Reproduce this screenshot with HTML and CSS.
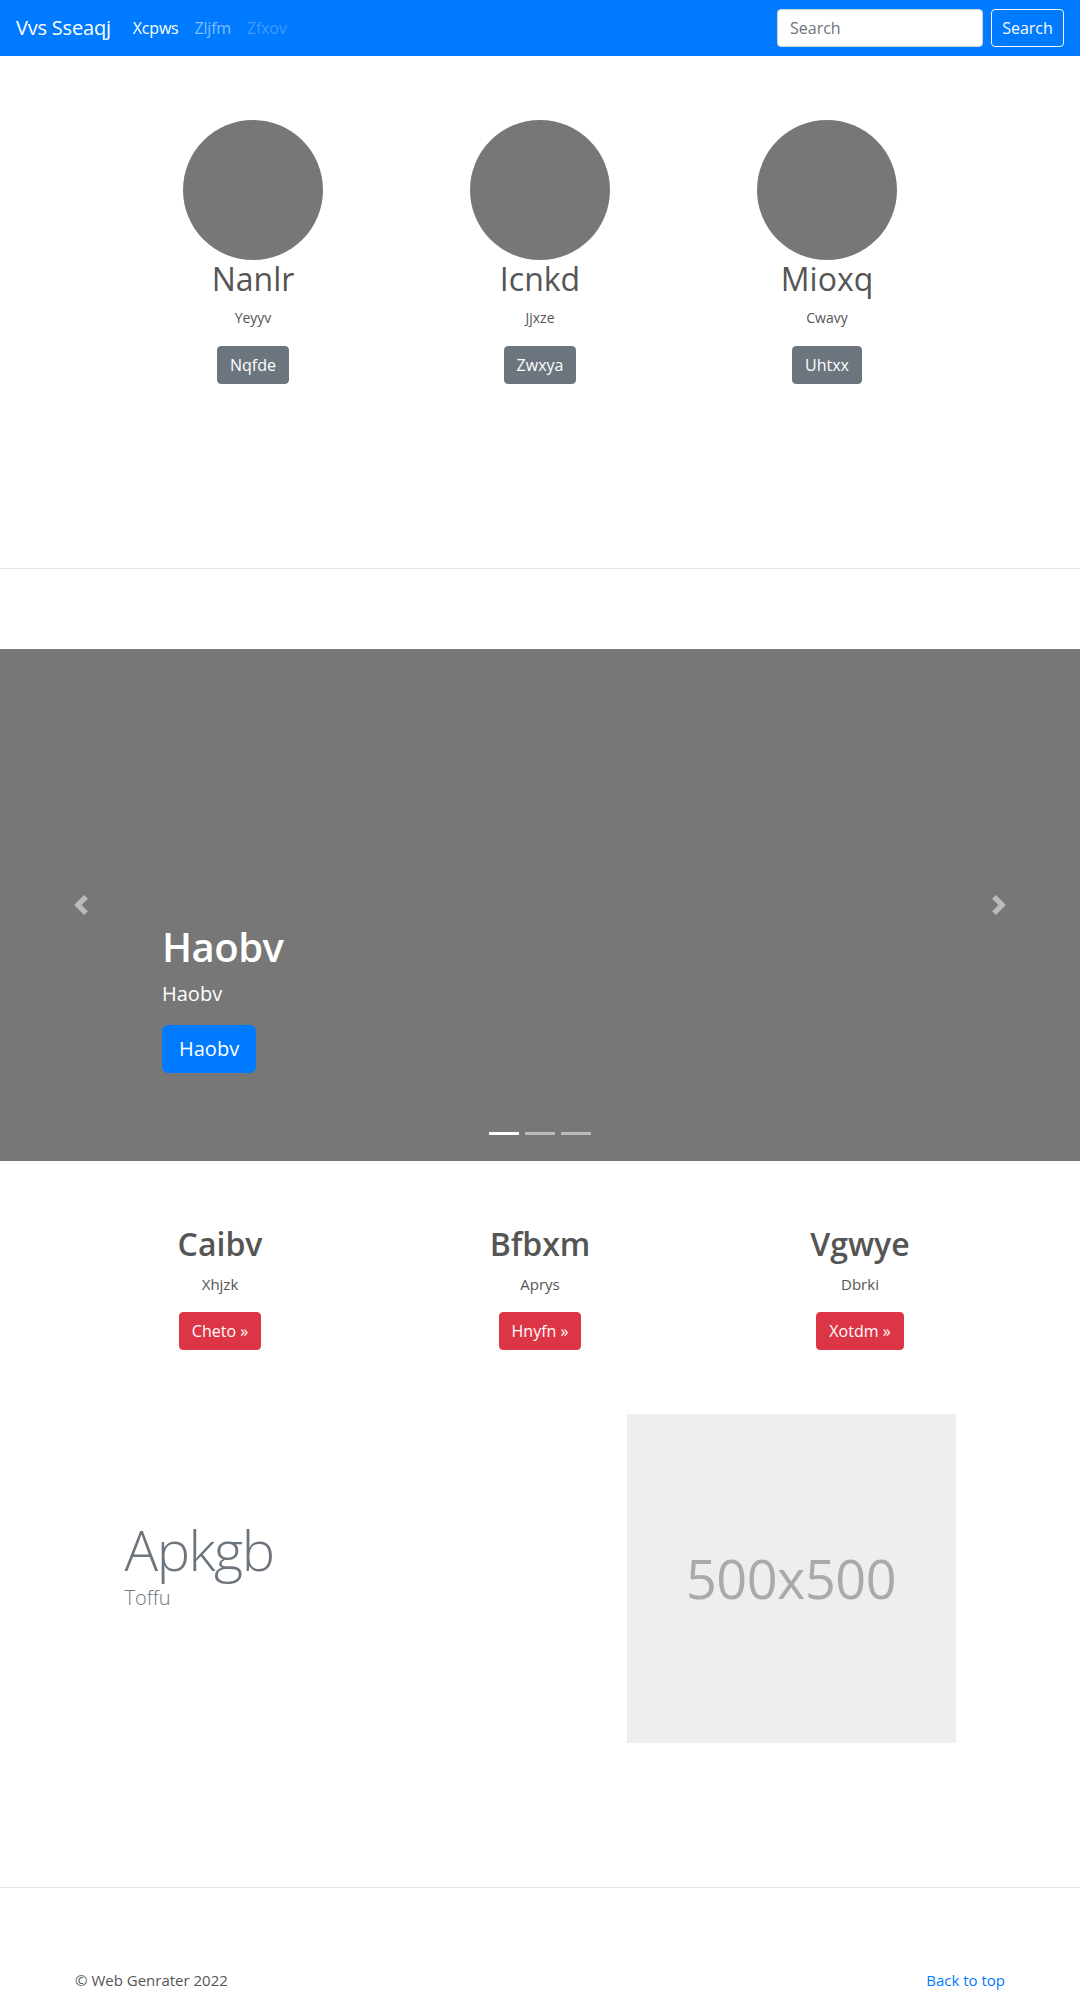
FILE: index.html
```html
<!DOCTYPE html>
<html lang="en">
<head>
<meta charset="utf-8">
<title>Vvs Sseaqj</title>
<link rel="stylesheet" href="styles.css">
</head>
<body>
<header class="navbar">
  <div class="nav-left">
    <a class="brand" href="#">Vvs Sseaqj</a>
    <ul class="nav-links">
      <li><a class="nav-link active" href="#">Xcpws</a></li>
      <li><a class="nav-link" href="#">Zljfm</a></li>
      <li><a class="nav-link disabled" href="#">Zfxov</a></li>
    </ul>
  </div>
  <form class="search">
    <input class="search-input" type="text" placeholder="Search">
    <button class="search-btn" type="button">Search</button>
  </form>
</header>

<main>
  <section class="profiles">
    <div class="profile">
      <div class="avatar"></div>
      <h2 class="profile-name">Nanlr</h2>
      <p class="profile-sub">Yeyyv</p>
      <p class="profile-action"><a class="btn btn-secondary" href="#">Nqfde</a></p>
    </div>
    <div class="profile">
      <div class="avatar"></div>
      <h2 class="profile-name">Icnkd</h2>
      <p class="profile-sub">Jjxze</p>
      <p class="profile-action"><a class="btn btn-secondary" href="#">Zwxya</a></p>
    </div>
    <div class="profile">
      <div class="avatar"></div>
      <h2 class="profile-name">Mioxq</h2>
      <p class="profile-sub">Cwavy</p>
      <p class="profile-action"><a class="btn btn-secondary" href="#">Uhtxx</a></p>
    </div>
  </section>

  <hr class="divider divider-top">

  <section class="carousel">
    <a class="control control-prev" href="#" aria-label="Previous">
      <svg width="20" height="20" viewBox="0 0 8 8"><path fill="#fff" d="M5.25 0l-4 4 4 4 1.5-1.5L4.25 4l2.5-2.5L5.25 0z"/></svg>
    </a>
    <div class="caption">
      <h1 class="caption-title">Haobv</h1>
      <p class="caption-text">Haobv</p>
      <p class="caption-action"><a class="btn btn-lg btn-primary" href="#">Haobv</a></p>
    </div>
    <a class="control control-next" href="#" aria-label="Next">
      <svg width="20" height="20" viewBox="0 0 8 8"><path fill="#fff" d="M2.75 0l-1.5 1.5L3.75 4l-2.5 2.5L2.75 8l4-4-4-4z"/></svg>
    </a>
    <ol class="indicators">
      <li class="active"></li>
      <li></li>
      <li></li>
    </ol>
  </section>

  <section class="features">
    <div class="feature">
      <h2 class="feature-title">Caibv</h2>
      <p class="feature-sub">Xhjzk</p>
      <p class="feature-action"><a class="btn btn-danger" href="#">Cheto »</a></p>
    </div>
    <div class="feature">
      <h2 class="feature-title">Bfbxm</h2>
      <p class="feature-sub">Aprys</p>
      <p class="feature-action"><a class="btn btn-danger" href="#">Hnyfn »</a></p>
    </div>
    <div class="feature">
      <h2 class="feature-title">Vgwye</h2>
      <p class="feature-sub">Dbrki</p>
      <p class="feature-action"><a class="btn btn-danger" href="#">Xotdm »</a></p>
    </div>
  </section>

  <section class="featurette">
    <div class="featurette-text">
      <h1 class="display">Apkgb</h1>
      <p class="lead">Toffu</p>
    </div>
    <div class="placeholder">500x500</div>
  </section>

  <hr class="divider divider-bottom">
</main>

<footer class="footer">
  <p class="copy">© Web Genrater 2022</p>
  <p class="back"><a href="#">Back to top</a></p>
</footer>
</body>
</html>
```

FILE: styles.css
```css
* { box-sizing: border-box; }

html, body {
  margin: 0;
  padding: 0;
}

body {
  font-family: "Open Sans", "Noto Sans", "Liberation Sans", sans-serif;
  font-size: 16px;
  line-height: 1.5;
  color: #212529;
  background: #fff;
}

a { text-decoration: none; }

/* Navbar */
.navbar {
  display: flex;
  align-items: center;
  justify-content: space-between;
  height: 56px;
  padding: 0 16px;
  background: #007bff;
}

.nav-left {
  display: flex;
  align-items: center;
}

.brand {
  color: #fff;
  font-size: 20px;
  line-height: 30px;
  padding: 5px 0;
  margin-right: 14px;
  letter-spacing: -0.2px;
}

.nav-links {
  display: flex;
  list-style: none;
  margin: 0;
  padding: 0;
}

.nav-link {
  display: block;
  padding: 8px;
  color: rgba(255, 255, 255, 0.5);
  letter-spacing: -0.2px;
}

.nav-link.active { color: #fff; }
.nav-link.disabled { color: rgba(255, 255, 255, 0.25); }

.search {
  display: flex;
  align-items: center;
  gap: 8px;
}

.search-input {
  width: 206px;
  height: 38px;
  padding: 6px 12px;
  font-family: inherit;
  font-size: 16px;
  color: #495057;
  background: #fff;
  border: 1px solid #ced4da;
  border-radius: 4px;
}

.search-input::placeholder { color: #6c757d; }

.search-btn {
  height: 38px;
  width: 73px;
  padding: 6px 0;
  font-family: inherit;
  font-size: 16px;
  line-height: 1.5;
  color: #f8f9fa;
  background: transparent;
  border: 1px solid #f8f9fa;
  border-radius: 4px;
}

/* Buttons */
.btn {
  display: inline-block;
  padding: 6px 12px;
  font-size: 16px;
  line-height: 24px;
  border: 1px solid transparent;
  border-radius: 4px;
  color: #fff;
}

.btn-secondary { background: #6c757d; border-color: #6c757d; }
.btn-danger { background: #dc3545; border-color: #dc3545; }
.btn-primary { background: #007bff; border-color: #007bff; }

.btn-lg {
  padding: 8px 16px;
  font-size: 20px;
  line-height: 30px;
  border-radius: 6px;
}

/* Profiles */
.profiles {
  width: 861px;
  margin: 0 auto;
  padding-top: 64px;
  display: grid;
  grid-template-columns: repeat(3, 1fr);
  text-align: center;
}

.avatar {
  width: 140px;
  height: 140px;
  margin: 0 auto;
  border-radius: 50%;
  background: #777;
}

.profile-name {
  margin: 0 0 8px;
  font-size: 32px;
  font-weight: 400;
  line-height: 1.2;
  color: #555;
}

.profile-sub {
  margin: 0 0 16px;
  font-size: 14px;
  line-height: 24px;
  color: #555;
}

.profile-action { margin: 0; }

/* Dividers */
.divider {
  border: 0;
  border-top: 1px solid #e5e5e5;
  margin: 0;
}

.divider-top { margin: 184px 0 80px; }
.divider-bottom { margin: 144px 0 80px; }

/* Carousel */
.carousel {
  position: relative;
  height: 512px;
  background: #777;
  margin-bottom: 64px;
}

.control {
  position: absolute;
  top: 0;
  bottom: 0;
  width: 15%;
  display: flex;
  align-items: center;
  justify-content: center;
  opacity: 0.5;
}

.control-prev { left: 0; }
.control-next { right: 0; }

.caption {
  position: absolute;
  left: 15%;
  right: 15%;
  bottom: 52px;
  padding: 20px 0;
  color: #fff;
  text-align: left;
}

.caption-title {
  margin: 0 0 8px;
  font-size: 40px;
  font-weight: 600;
  line-height: 1.2;
  letter-spacing: -0.5px;
}

.caption-text {
  margin: 0 0 16px;
  font-size: 20px;
  line-height: 30px;
}

.caption-action { margin: 0 0 16px; }

.indicators {
  position: absolute;
  left: 0;
  right: 0;
  bottom: 0;
  margin: 0 0 16px;
  padding: 0;
  list-style: none;
  display: flex;
  justify-content: center;
}

.indicators li {
  width: 30px;
  height: 3px;
  margin: 0 3px;
  background: #fff;
  opacity: 0.5;
  box-sizing: content-box;
  border-top: 10px solid transparent;
  border-bottom: 10px solid transparent;
  background-clip: padding-box;
}

.indicators li.active { opacity: 1; }

/* Features */
.features {
  width: 960px;
  margin: 0 auto;
  display: grid;
  grid-template-columns: repeat(3, 1fr);
  text-align: center;
}

.feature-title {
  margin: 0 0 8px;
  font-size: 32px;
  font-weight: 600;
  line-height: 1.2;
  color: #555;
}

.feature-sub {
  margin: 0 0 16px;
  font-size: 15px;
  line-height: 24px;
  color: #555;
}

.feature-action { margin: 0; }

/* Featurette */
.featurette {
  width: 831px;
  margin: 64px auto 0;
  display: flex;
  align-items: center;
}

.featurette-text {
  flex: 1;
}

.display {
  margin: 0;
  font-size: 56px;
  font-weight: 300;
  line-height: 1.2;
  letter-spacing: -1.5px;
  color: #6c757d;
}

.lead {
  margin: 0 0 28px;
  font-size: 20px;
  font-weight: 300;
  line-height: 30px;
  color: #6c757d;
}

.placeholder {
  width: 329px;
  height: 329px;
  background: #eee;
  color: #aaa;
  font-size: 54px;
  letter-spacing: -0.5px;
  display: flex;
  align-items: center;
  justify-content: center;
}

/* Footer */
.footer {
  width: 960px;
  margin: 0 auto;
  padding: 0 15px;
  display: flex;
  justify-content: space-between;
}

.footer p {
  margin: 0 0 16px;
  font-size: 15px;
  line-height: 24px;
}

.copy { color: #555; }

.back a { color: #007bff; }
```
